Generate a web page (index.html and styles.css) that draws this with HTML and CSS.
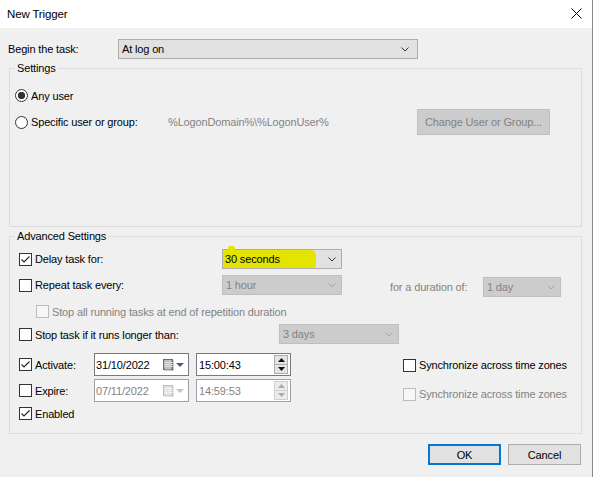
FILE: index.html
```html
<!DOCTYPE html>
<html>
<head>
<meta charset="utf-8">
<link rel="stylesheet" href="styles.css">
</head>
<body>
<div class="window">
  <div class="titlebar">
    <span class="title">New Trigger</span>
    <svg class="close" viewBox="0 0 11 11"><path d="M0.5 0.5 L10.5 10.5 M10.5 0.5 L0.5 10.5" stroke="#000" stroke-width="1" fill="none"/></svg>
  </div>

  <div class="begin-row">
    <span class="begin-label">Begin the task:</span>
    <div class="combo combo-begin">
      <span>At log on</span>
      <svg class="chev" viewBox="0 0 8 5"><polyline points="0.5,0.5 4,4 7.5,0.5" fill="none" stroke="#333"/></svg>
    </div>
  </div>

  <fieldset class="group group-settings">
    <legend>Settings</legend>
    <div class="radio-row r1">
      <span class="radio checked"></span><span class="lbl">Any user</span>
    </div>
    <div class="radio-row r2">
      <span class="radio-wrap"><span class="radio"></span><span class="lbl">Specific user or group:</span></span>
      <span class="domain">%LogonDomain%\%LogonUser%</span>
      <span class="btn btn-disabled btn-change">Change User or Group...</span>
    </div>
  </fieldset>

  <fieldset class="group group-adv">
    <legend>Advanced Settings</legend>

    <div class="row row-a">
      <span class="cl cl-wide">
        <span class="chk"><svg viewBox="0 0 11 11"><polyline points="1.5,5.5 4,8 9.5,2.5" fill="none" stroke="#222" stroke-width="1.1"/></svg></span>
        <span class="lbl">Delay task for:</span>
      </span>
      <div class="combo combo-std combo-delay">
        <span class="hl-blob"></span>
        <span class="hl">30 seconds</span>
        <svg class="chev" viewBox="0 0 8 5"><polyline points="0.5,0.5 4,4 7.5,0.5" fill="none" stroke="#333"/></svg>
      </div>
    </div>

    <div class="row row-b">
      <span class="cl cl-wide">
        <span class="chk"></span>
        <span class="lbl">Repeat task every:</span>
      </span>
      <div class="combo combo-std combo-disabled">
        <span>1 hour</span>
        <svg class="chev" viewBox="0 0 8 5"><polyline points="0.5,0.5 4,4 7.5,0.5" fill="none" stroke="#a6a6a6"/></svg>
      </div>
      <span class="dur-label">for a duration of:</span>
      <div class="combo combo-day combo-disabled">
        <span>1 day</span>
        <svg class="chev" viewBox="0 0 8 5"><polyline points="0.5,0.5 4,4 7.5,0.5" fill="none" stroke="#a6a6a6"/></svg>
      </div>
    </div>

    <div class="row row-c">
      <span class="chk chk-disabled"></span>
      <span class="lbl dis">Stop all running tasks at end of repetition duration</span>
    </div>

    <div class="row row-d">
      <span class="cl cl-stop">
        <span class="chk"></span>
        <span class="lbl">Stop task if it runs longer than:</span>
      </span>
      <div class="combo combo-std combo-disabled">
        <span>3 days</span>
        <svg class="chev" viewBox="0 0 8 5"><polyline points="0.5,0.5 4,4 7.5,0.5" fill="none" stroke="#a6a6a6"/></svg>
      </div>
    </div>

    <div class="row row-e">
      <span class="cl cl-date">
        <span class="chk"><svg viewBox="0 0 11 11"><polyline points="1.5,5.5 4,8 9.5,2.5" fill="none" stroke="#222" stroke-width="1.1"/></svg></span>
        <span class="lbl">Activate:</span>
      </span>
      <div class="picker date">
        <span class="ptext">31/10/2022</span>
        <svg class="cal" viewBox="0 0 11 12">
          <rect x="0.5" y="0.5" width="9" height="10" fill="#a9a9a9" stroke="#6a6a6a"/>
          <path d="M1 3.5 H10 M1 5.5 H10 M1 7.5 H10 M3 1 V11 M5 1 V11 M7 1 V11" stroke="#e6e6e6" stroke-width="0.8"/>
          <path d="M10.5 1.5 V11.5 H1.5" stroke="#c8c8c8" fill="none"/>
        </svg>
        <svg class="tri" viewBox="0 0 8 4"><polygon points="0,0 8,0 4,4" fill="#4b5c7e"/></svg>
      </div>
      <div class="picker time">
        <span class="ptext">15:00:43</span>
        <span class="spin">
          <span class="spin-btn"><svg viewBox="0 0 7 4"><polygon points="3.5,0 7,4 0,4" fill="#111"/></svg></span>
          <span class="spin-btn"><svg viewBox="0 0 7 4"><polygon points="0,0 7,0 3.5,4" fill="#111"/></svg></span>
        </span>
      </div>
      <span class="sync">
        <span class="chk"></span><span class="lbl">Synchronize across time zones</span>
      </span>
    </div>

    <div class="row row-f">
      <span class="cl cl-date">
        <span class="chk"></span>
        <span class="lbl">Expire:</span>
      </span>
      <div class="picker date picker-disabled">
        <span class="ptext">07/11/2022</span>
        <svg class="cal" viewBox="0 0 11 12">
          <rect x="0.5" y="0.5" width="9" height="10" fill="#dadada" stroke="#bdbdbd"/>
          <path d="M1 3.5 H10 M1 5.5 H10 M1 7.5 H10 M3 1 V11 M5 1 V11 M7 1 V11" stroke="#f4f4f4" stroke-width="0.8"/>
          <path d="M10.5 1.5 V11.5 H1.5" stroke="#e2e2e2" fill="none"/>
        </svg>
        <svg class="tri" viewBox="0 0 8 4"><polygon points="0,0 8,0 4,4" fill="#c4c4c4"/></svg>
      </div>
      <div class="picker time picker-disabled">
        <span class="ptext">14:59:53</span>
        <span class="spin spin-disabled">
          <span class="spin-btn"><svg viewBox="0 0 7 4"><polygon points="3.5,0 7,4 0,4" fill="#a9a9a9"/></svg></span>
          <span class="spin-btn"><svg viewBox="0 0 7 4"><polygon points="0,0 7,0 3.5,4" fill="#a9a9a9"/></svg></span>
        </span>
      </div>
      <span class="sync sync-f">
        <span class="chk chk-disabled"></span><span class="lbl dis">Synchronize across time zones</span>
      </span>
    </div>

    <div class="row row-g">
      <span class="chk"><svg viewBox="0 0 11 11"><polyline points="1.5,5.5 4,8 9.5,2.5" fill="none" stroke="#222" stroke-width="1.1"/></svg></span>
      <span class="lbl">Enabled</span>
    </div>
  </fieldset>

  <div class="buttons">
    <span class="btn btn-ok">OK</span>
    <span class="btn btn-cancel">Cancel</span>
  </div>
</div>
</body>
</html>
```

FILE: styles.css
```css
* { box-sizing: border-box; }

body {
  margin: 0;
  background: #f0f0f0;
  font-family: "Liberation Sans", Arial, sans-serif;
  font-size: 11px;
  letter-spacing: -0.15px;
  color: #000;
}

.window {
  width: 593px;
  height: 477px;
  border-right: 1px solid #8a8a8a;
  background: #f0f0f0;
  overflow: hidden;
}

.titlebar {
  height: 28px;
  background: #fff;
  display: flex;
  align-items: center;
  justify-content: space-between;
  padding: 0 10px 1px 7px;
}
.title { font-size: 11.5px; }
.close { width: 11px; height: 11px; display: block; }

.begin-row {
  display: flex;
  align-items: center;
  height: 20px;
  margin-top: 11px;
  padding-left: 8px;
}
.begin-label { width: 110px; }

.combo {
  position: relative;
  display: flex;
  align-items: center;
  justify-content: space-between;
  height: 20px;
  border: 1px solid #adadad;
  background: #e1e1e1;
  padding: 0 5px 0 3px;
  flex: none;
}
.combo-begin { width: 300px; padding-right: 8px; }
.combo-std { width: 120px; }
.combo-day { width: 78px; margin-top: 2px; }
.combo-disabled {
  background: #cccccc;
  border-color: #bfbfbf;
  color: #838383;
}
.chev { width: 8px; height: 5px; display: block; }

.combo-delay { padding-left: 0; }
.hl {
  display: flex;
  align-items: center;
  height: 18px;
  width: 93px;
  padding-left: 2px;
  background: #e4e400;
  border-radius: 0 5px 4px 0;
}
.hl-blob {
  position: absolute;
  left: 5px;
  top: -4px;
  width: 7px;
  height: 6px;
  background: #e4e400;
  border-radius: 2px 3px 0 0;
}

/* group boxes */
.group {
  margin: 2px 0 0 9px;
  width: 573px;
  min-width: 0;
  border: 1px solid #dcdcdc;
  padding: 0;
}
.group legend {
  padding: 0 2px;
  line-height: 14px;
  font-size: 11px;
}

.group-settings { padding: 0 0 91px 5px; }
.group-adv { padding: 0 0 13px 9px; }
.group-adv legend { margin-left: -4px; }

.radio-row { display: flex; align-items: center; }
.r1 { margin-top: 14px; height: 13px; }
.r2 { margin-top: 7px; height: 26px; }
.radio-wrap { display: flex; align-items: center; width: 153px; flex: none; }

.radio {
  width: 13px;
  height: 13px;
  border: 1px solid #333;
  border-radius: 50%;
  background: #fff;
  flex: none;
}
.radio.checked {
  background: radial-gradient(circle, #333 0, #333 3.4px, #fff 4px);
}

.lbl { margin-left: 3px; white-space: nowrap; line-height: 14px; }
.dis { color: #838383; }

.domain { width: 249px; color: #838383; flex: none; }

.btn {
  display: flex;
  align-items: center;
  justify-content: center;
  border: 1px solid #adadad;
  background: #e1e1e1;
  flex: none;
}
.btn-change {
  width: 133px;
  height: 26px;
  background: #cccccc;
  border-color: #bfbfbf;
  color: #838383;
}

/* advanced rows */
.row { display: flex; align-items: center; }
.row-a { margin-top: 6px; height: 20px; }
.row-b { margin-top: 6px; height: 23px; align-items: flex-start; }
.row-b .cl { margin-top: 3px; }
.row-c { margin-top: 7px; height: 13px; padding-left: 17px; }
.row-d { margin-top: 6px; height: 20px; }
.row-d .cl { margin-top: 1px; }
.row-e { margin-top: 9px; height: 23px; }
.row-f { margin-top: 3px; height: 23px; }
.row-g { margin-top: 5px; height: 13px; }

.cl { display: flex; align-items: center; flex: none; }
.cl-wide { width: 203px; }
.cl-stop { width: 260px; }
.cl-date { width: 75px; }

.chk {
  width: 13px;
  height: 13px;
  border: 1px solid #333;
  background: #fff;
  flex: none;
  display: flex;
  align-items: center;
  justify-content: center;
}
.chk svg { width: 11px; height: 11px; display: block; }
.chk-disabled { border-color: #bcbcbc; background: #f7f7f7; }

.dur-label {
  width: 93px;
  margin-left: 48px;
  margin-top: 5px;
  line-height: 14px;
  color: #838383;
  flex: none;
}

.picker {
  display: flex;
  align-items: center;
  height: 23px;
  width: 95px;
  border: 1px solid #7a7a7a;
  background: #fff;
  flex: none;
}
.picker-disabled { border-color: #a0a0a0; color: #838383; }
.date { padding-left: 1px; }
.date .ptext { width: 67px; }
.cal { width: 11px; height: 12px; display: block; }
.tri { width: 8px; height: 4px; display: block; margin-left: 2px; }

.time { margin-left: 7px; padding-left: 2px; justify-content: space-between; padding-right: 2px; }
.spin {
  display: flex;
  flex-direction: column;
  width: 14px;
  height: 19px;
  border: 1px solid #adadad;
  background: #e5e5e5;
}
.spin-btn {
  flex: 1;
  display: flex;
  align-items: center;
  justify-content: center;
}
.spin-btn + .spin-btn { border-top: 1px solid #adadad; }
.spin-btn svg { width: 7px; height: 4px; display: block; }
.spin-disabled { border-color: #d0d0d0; background: #ececec; }
.spin-disabled .spin-btn + .spin-btn { border-top-color: #d0d0d0; }

.sync { display: flex; align-items: center; margin-left: 112px; margin-top: 1px; }
.sync-f { margin-top: 7px; }

.buttons {
  display: flex;
  justify-content: flex-end;
  gap: 7px;
  margin-top: 10px;
  padding-right: 11px;
}
.btn-ok {
  width: 73px;
  height: 21px;
  border: 2px solid #0078d7;
}
.btn-cancel {
  width: 73px;
  height: 21px;
}
```
